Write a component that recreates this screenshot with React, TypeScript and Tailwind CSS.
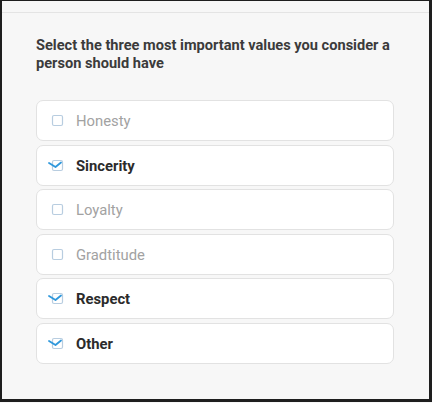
const options = [
  { label: "Honesty", checked: false },
  { label: "Sincerity", checked: true },
  { label: "Loyalty", checked: false },
  { label: "Gradtitude", checked: false },
  { label: "Respect", checked: true },
  { label: "Other", checked: true },
];

function CheckIcon({ checked }: { checked: boolean }) {
  return (
    <svg width="18" height="14" viewBox="0 0 18 14" className="shrink-0">
      <rect x="5.5" y="1.5" width="10" height="10" rx="1.5" fill="none" stroke="#b8cde0" strokeWidth="1.2" />
      {checked && (
        <path d="M2 4 L8.5 8 L14 3.5" fill="none" stroke="#2f98dc" strokeWidth="1.8" strokeLinecap="round" strokeLinejoin="round" />
      )}
    </svg>
  );
}

export default function App() {
  return (
    <div
      className="h-[403px] w-[432px] bg-[#f7f7f7] text-[#3a3a3a]"
      style={{ fontFamily: "Roboto, 'Liberation Sans', sans-serif" }}
    >
      <div className="h-[402px] w-full border-t border-l-2 border-r-[3px] border-b-[3px] border-[#1e1e1e]">
        <div className="mt-[11px] border-t border-[#e4e4e4]" />
        <div className="px-[34px] pt-[23px]">
          <h1 className="w-[360px] text-[14.6px] font-bold leading-[18px] text-[#3b3b3b]">
            Select the three most important values you consider a person should have
          </h1>
          <div className="mt-[28px] flex w-[358px] flex-col gap-[3.6px]">
            {options.map((o) => (
              <div
                key={o.label}
                className="flex h-[41px] items-center rounded-[7px] border border-[#e2e2e2] bg-white pl-[10px] pt-[1px]"
              >
                <CheckIcon checked={o.checked} />
                <span
                  className={
                    o.checked
                      ? "ml-[11px] text-[14.8px] font-bold text-[#2b2b2b]"
                      : "ml-[11px] text-[14.8px] text-[#a2a2a2]"
                  }
                >
                  {o.label}
                </span>
              </div>
            ))}
          </div>
        </div>
      </div>
    </div>
  );
}
